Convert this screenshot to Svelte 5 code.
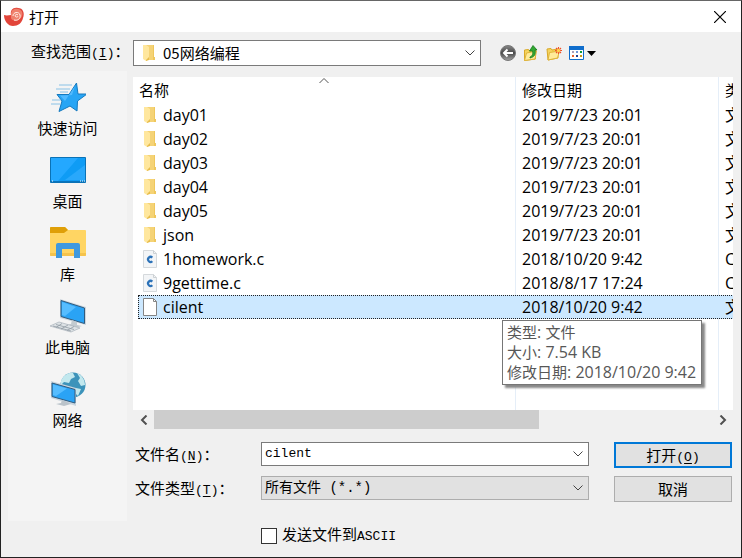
<script>
  const files = [
    { name: 'day01', date: '2019/7/23 20:01', type: '文件夹', kind: 'folder' },
    { name: 'day02', date: '2019/7/23 20:01', type: '文件夹', kind: 'folder' },
    { name: 'day03', date: '2019/7/23 20:01', type: '文件夹', kind: 'folder' },
    { name: 'day04', date: '2019/7/23 20:01', type: '文件夹', kind: 'folder' },
    { name: 'day05', date: '2019/7/23 20:01', type: '文件夹', kind: 'folder' },
    { name: 'json', date: '2019/7/23 20:01', type: '文件夹', kind: 'folder' },
    { name: '1homework.c', date: '2018/10/20 9:42', type: 'C 文件', kind: 'c' },
    { name: '9gettime.c', date: '2018/8/17 17:24', type: 'C 文件', kind: 'c' },
    { name: 'cilent', date: '2018/10/20 9:42', type: '文件', kind: 'file' }
  ];
  const places = ['快速访问', '桌面', '库', '此电脑', '网络'];
  let selected = $state('cilent');
  let fileName = $state('cilent');

  function pick(name) {
    selected = name;
    fileName = name;
  }
</script>

{#snippet folder()}
  <svg class="icon" width="16" height="18" viewBox="0 0 16 18" aria-hidden="true">
    <path d="M5 1h8v12h1v3H5z" fill="#efc75c" />
    <path d="M5 1h7v15H5z" fill="#f5d376" />
    <path d="M2 1h3l3 2v12l-3 2-3-2z" fill="#ffe79e" />
    <path d="M5 16l3-3v3l-3 1z" fill="#e8bd4c" />
  </svg>
{/snippet}

{#snippet chevron()}
  <svg class="chev" width="10" height="6" viewBox="0 0 10 6" aria-hidden="true">
    <path d="M.5.5 5 5 9.500.5" fill="none" stroke="#444" stroke-width="1" />
  </svg>
{/snippet}

<div class="dialog" role="dialog" aria-label="打开">
  <header>
    <svg width="22" height="20" viewBox="0 0 22 20" aria-hidden="true">
      <path d="M1 8C4 9 6 8 8 8 7 3 10 0 15 1c5 0 7 5 5 10-1 5-5 8-10 8C5 19 1 14 1 8z" fill="#e2453a" />
      <path d="M8 8c0-5 3-7 7-6 5 1 6 6 2 10-3 3-8 2-9-1z" fill="#ef806c" />
      <path d="M10 9c0-4 6-5 7-1 1 4-3 6-6 5M15 8c-2-2-4 1-2 2 1 0 2 0 2-1" fill="none" stroke="#fff0e8" stroke-width="1" />
    </svg>
    <h1>打开</h1>
    <button class="close" aria-label="关闭">
      <svg width="12" height="12" viewBox="0 0 12 12"><path d="M0 0l12 12M12 0L0 12" stroke="#000" stroke-width="1.200" /></svg>
    </button>
  </header>

  <div class="toolbar">
    <label for="range">查找范围<span class="mono">(<u>I</u>)</span>：</label>
    <div class="combo look">
      {@render folder()}
      <select id="range"><option>05网络编程</option></select>
      {@render chevron()}
    </div>
    <div class="tools">
      <button aria-label="后退">
        <svg width="18" height="18" viewBox="0 0 18 18">
          <defs><linearGradient id="ball" x2="0" y2="1"><stop stop-color="#888" /><stop offset=".5" stop-color="#484848" /><stop offset="1" stop-color="#a4a4a4" /></linearGradient></defs>
          <circle cx="9" cy="9" r="7.500" fill="url(#ball)" stroke="#777" />
          <path d="M14 9H5M8.500 5.500 5 9l3.500 3.500" fill="none" stroke="#fff" stroke-width="2" />
        </svg>
      </button>
      <button aria-label="向上一级">
        <svg width="18" height="18" viewBox="0 0 18 18">
          <path d="M2.500 6l4-.5 1 1.500 6-1v9l-11 1.500z" fill="#f5d45e" stroke="#d9a928" />
          <path d="M4.500 9l10-2-1.500 8-10.500 1.500z" fill="#ffeb9a" stroke="#dfb43a" />
          <path d="M8 13c3-1 3-4 2.500-6H7.500L11 1.500 15 6h-2c1 5-1 7-5 8z" fill="#32a832" stroke="#177b1c" stroke-width=".8" />
        </svg>
      </button>
      <button aria-label="新建文件夹">
        <svg width="18" height="18" viewBox="0 0 18 18">
          <path d="M2 5l4-.5 1 1.500 6-1v9L3 16z" fill="#f5d45e" stroke="#d9a928" />
          <path d="M4.500 8.500l10-1.500-2 7L3 16z" fill="#ffeb9a" stroke="#dfb43a" />
          <path d="M13.500 3v7M10 6.500h7M11 4l5 5M16 4l-5 5" stroke="#ef5028" stroke-width="1.100" />
          <circle cx="13.500" cy="6.500" r="1.700" fill="#ffd24a" />
        </svg>
      </button>
      <button class="view" aria-label="查看菜单">
        <svg width="29" height="18" viewBox="0 0 29 18">
          <path d="M1.500 2.500h14v13h-14z" fill="#fff" stroke="#0f6dcc" />
          <path d="M1 2h15v4H1z" fill="#0f6dcc" />
          <path d="M4 7h2v2H4z" fill="#aaa0b8" /><path d="M8 7h2v2H8z" fill="#6d94d8" /><path d="M12 7h2v2h-2z" fill="#0c9a38" />
          <path d="M4 11h2v2H4z" fill="#e8622c" /><path d="M8 11h2v2H8z" fill="#24408e" /><path d="M12 11h2v2h-2z" fill="#c89a10" />
          <path d="M19 7h9l-4.500 5z" fill="#000" />
        </svg>
      </button>
    </div>
  </div>

  <div class="body">
    <nav>
      {#each places as place, i}
        <button class="place">
          <svg width="36" height="36" viewBox="0 0 36 36" aria-hidden="true">
            {#if i === 0}
              <path d="M26.500 4l1.500 11h9l-9.500 7L27 32l-7-5L9 32.500l3-10.500L7 15.500h12z" fill="#27a5f5" stroke="#1679be" />
              <path d="M25 7l-3 9-12 .5 5 5.500z" fill="#51baff" />
              <path d="M9 6h13M6 10h14M10 13h8M2 21h9M1 25h9" stroke="#70b6e3" stroke-width=".8" />
            {:else if i === 1}
              <path d="M.5 5.500h35v25H.5z" fill="#0f9cf5" stroke="#0a72b6" />
              <path d="M1 6h27L8 29H1z" fill="#24a8ff" />
              <path d="M35 13v15H15z" fill="#3bb0ff" opacity=".6" />
              <path d="M1 29h34v1H1z" fill="#0874bd" />
              <path d="M2 29h1M30 29h1M32 29h1M34 29h1" stroke="#fff" />
            {:else if i === 2}
              <path d="M0 3q0-1 1-1h14l3 3h17q1 0 1 1v24q0 1-1 1H1q-1 0-1-1z" fill="#ffd563" />
              <path d="M0 3q0-1 1-1h14l3 3-4 3H0z" fill="#df9f08" />
              <path d="M0 28h36v2q0 1-1 1H1q-1 0-1-1z" fill="#f5c34c" />
              <path d="M6 33V20q0-2 2-2h20q2 0 2 2v13h-6v-9H12v9z" fill="#3f99df" />
            {:else if i === 3}
              <path d="M10 1l26 8v18l-26-7z" fill="#cbd5dd" />
              <path d="M11 2.500L34.500 10v15.500L11 18.500z" fill="#2aa3f5" stroke="#315b7d" />
              <path d="M12 4l14 5-11 9-3-1z" fill="#56bdff" />
              <path d="M22 22l5 2v3l5 1-7 2-8-3 4-1z" fill="#c3cbd0" />
              <path d="M0 28l9-4 21 6-9 4z" fill="#dee3e6" stroke="#a9b2ba" stroke-width=".7" />
              <path d="M3 28l18 5M6 26.500l18 5M6 29.500l6-4M11 31l7-4M17 32.500l7-4" stroke="#929ca5" stroke-width=".8" />
            {:else}
              <circle cx="23" cy="14" r="12.500" fill="#3c93ba" />
              <path d="M11 10c2-5 7-9 12-8l2 4-4 2-2 4-5-1-3 3zM27 2c5 2 8 7 8 12l-4 1-3-5 2-3zM26 17l5 1-3 7-4-4z" fill="#c2e8ee" />
              <path d="M1 10l25 7v18L1 27z" fill="#c9d5de" />
              <path d="M2 12l23 6.500V32L2 25.500z" fill="#2aa3f5" stroke="#315b7d" />
              <path d="M3 13.500l14 4L6 25l-3-1z" fill="#56bdff" />
              <path d="M12 29l5 2 4 2-7 2-8-2 5-1z" fill="#bac3ca" />
            {/if}
          </svg>
          <span>{place}</span>
        </button>
      {/each}
    </nav>

    <main>
      <div class="list">
        <svg class="sort" width="10" height="6" viewBox="0 0 10 6" aria-hidden="true"><path d="M.5 5 5 .5 9.500 5" fill="none" stroke="#555" /></svg>
        <table>
          <colgroup><col class="c-name" /><col class="c-date" /><col class="c-type" /></colgroup>
          <thead><tr><th>名称</th><th>修改日期</th><th>类型</th></tr></thead>
          <tbody>
            {#each files as f}
              <tr class:selected={f.name === selected} onclick={() => pick(f.name)}>
                <td>
                  <div class="name">
                    {#if f.kind === 'folder'}
                      {@render folder()}
                    {:else}
                      <svg class="icon" width="16" height="20" viewBox="0 0 16 20" aria-hidden="true">
                        <path d="M1.500 1.500h10l3 3v14h-13z" fill={f.kind === 'c' ? '#f3f5f7' : '#fff'} stroke={f.kind === 'c' ? '#d5d9dc' : '#858585'} />
                        <path d="M11.500 1.500v3h3" fill="none" stroke={f.kind === 'c' ? '#cdd1d4' : '#858585'} />
                        {#if f.kind === 'c'}
                          <path d="M10.300 8.600a2.500 2.500 0 1 0 0 3.600" fill="none" stroke="#2c72b8" stroke-width="2.200" />
                        {/if}
                      </svg>
                    {/if}
                    <span>{f.name}</span>
                  </div>
                </td>
                <td>{f.date}</td>
                <td>{f.type}</td>
              </tr>
            {/each}
          </tbody>
        </table>
        <div class="tip" role="tooltip">
          <p>类型<b>{': '}</b>文件</p>
          <p>大小<b>: 7.54 KB</b></p>
          <p>修改日期<b>: 2018/10/20 9:42</b></p>
        </div>
      </div>

      <div class="scroll">
        <button aria-label="向左滚动"><svg width="8" height="10" viewBox="0 0 8 10"><path d="M6.500.5 2 5l4.500 4.500" fill="none" stroke="#505050" stroke-width="2" /></svg></button>
        <div class="track"><div class="thumb"></div></div>
        <button aria-label="向右滚动"><svg width="8" height="10" viewBox="0 0 8 10"><path d="M1.500.5 6 5 1.500 9.500" fill="none" stroke="#505050" stroke-width="2" /></svg></button>
      </div>

      <form onsubmit={(e) => e.preventDefault()}>
        <label for="fname">文件名<span class="mono">(<u>N</u>)</span>：</label>
        <div class="combo">
          <input id="fname" type="text" bind:value={fileName} />
          {@render chevron()}
        </div>
        <button class="push primary" type="submit">打开<span class="mono">(<u>O</u>)</span></button>

        <label for="ftype">文件类型<span class="mono">(<u>T</u>)</span>：</label>
        <div class="combo gray">
          <select id="ftype"><option>所有文件 (*.*)</option></select>
          {@render chevron()}
        </div>
        <button class="push" type="button">取消</button>

        <label class="check"><input type="checkbox" /><span>发送文件到<span class="mono">ASCII</span></span></label>
      </form>
    </main>
  </div>
</div>

<style>
  :global(body) { margin: 0; }
  .dialog, .dialog * { box-sizing: border-box; }
  .dialog {
    min-height: 100vh;
    display: flex;
    flex-direction: column;
    background: #f0f0f0;
    border: 1px solid #222;
    border-top-color: #666;
    color: #000;
    font: 15px/22px 'Noto Sans CJK SC', sans-serif;
  }
  button, input, select { font: inherit; color: inherit; }
  button { background: none; border: 0; padding: 0; }
  svg { display: block; flex: none; }
  .mono { font-family: 'Liberation Mono', monospace; font-size: 13px; }
  u { text-underline-offset: 2px; }

  header {
    height: 31px;
    display: flex;
    align-items: center;
    background: #fff;
    padding-left: 2px;
  }
  h1 { flex: 1; margin: 0 0 0 4px; font-size: 15px; font-weight: 400; }
  .close { width: 42px; height: 31px; display: grid; place-items: center; }

  .toolbar {
    display: flex;
    align-items: center;
    height: 39px;
    padding: 2px 0 0 30px;
  }
  .toolbar label { width: 102px; white-space: nowrap; }
  .combo {
    display: flex;
    align-items: center;
    min-width: 0;
    height: 24px;
    padding: 0 5px 0 3px;
    background: #fff;
    border: 1px solid #7a7a7a;
  }
  .combo select, .combo input {
    flex: 1;
    min-width: 0;
    height: 22px;
    margin: 0;
    padding: 0;
    border: 0;
    outline: 0;
    background: none;
    appearance: none;
  }
  .combo input { font-family: 'Liberation Mono', monospace; font-size: 13px; }
  .combo.gray { background: #e1e1e1; border-color: #adadad; }
  .combo.gray select { font-family: 'Liberation Mono', 'Noto Sans CJK SC', monospace; font-size: 14px; }
  .look { flex: 1; height: 26px; padding-left: 7px; }
  .look select { margin-left: 6px; }
  .tools { display: flex; gap: 5px; width: 260px; padding-left: 18px; }

  .body { flex: 1; display: flex; gap: 6px; padding: 0 8px 0 7px; }
  nav {
    width: 119px;
    flex: none;
    margin-bottom: 36px;
    padding-top: 8px;
    background: #f4f4f4;
  }
  .place {
    width: 100%;
    height: 73px;
    display: flex;
    flex-direction: column;
    align-items: center;
    gap: 2px;
  }

  main { flex: 1; min-width: 0; display: flex; flex-direction: column; padding-top: 6px; }
  .list {
    position: relative;
    flex: 1;
    min-height: 333px;
    overflow: hidden;
    padding-left: 5px;
    background:
      linear-gradient(#e5eef8, #e5eef8) 382px 0 / 1px 100% no-repeat,
      linear-gradient(#e5eef8, #e5eef8) 585px 0 / 1px 100% no-repeat,
      #fff;
  }
  .sort { position: absolute; left: 186px; top: 1px; }
  table { width: 720px; table-layout: fixed; border-collapse: collapse; }
  .c-name { width: 378px; }
  .c-date { width: 203px; }
  th, td { padding: 0 0 0 6px; text-align: left; font-weight: 400; white-space: nowrap; }
  th { height: 26px; }
  th:first-child { padding-left: 1px; }
  td { height: 24px; font: 16px/22px 'Open Sans', 'Noto Sans CJK SC', sans-serif; }
  td:first-child { padding-left: 4px; }
  .name { display: flex; align-items: center; gap: 5px; height: 22px; }
  .selected { background: #cce8ff; outline: 1px dotted #222; outline-offset: -1px; }
  .tip {
    position: absolute;
    left: 369px;
    top: 243px;
    padding: 1px 5px 2px 4px;
    background: #fff;
    border: 1px solid #767676;
    box-shadow: 3px 3px 2px #888;
    color: #575757;
    white-space: nowrap;
  }
  .tip p { margin: 0; line-height: 20px; }
  .tip b { font-family: 'Open Sans', sans-serif; font-size: 16px; font-weight: 400; white-space: pre; }

  .scroll { display: flex; height: 19px; }
  .scroll button { width: 21px; display: grid; place-items: center; }
  .track { flex: 1; }
  .thumb { width: 69%; height: 19px; background: #cdcdcd; }

  form {
    display: grid;
    grid-template-columns: 126px minmax(0, 1fr) 118px;
    grid-template-rows: 26px 26px 38px;
    row-gap: 8px;
    align-items: center;
    padding: 13px 1px 9px 2px;
  }
  form label { white-space: nowrap; }
  form .combo { align-self: start; margin-right: 25px; }
  .push {
    height: 26px;
    background: #e1e1e1;
    border: 1px solid #adadad;
  }
  .primary { border: 2px solid #0078d7; }
  .check {
    grid-column: 2 / 4;
    align-self: end;
    display: flex;
    align-items: center;
    gap: 5px;
  }
  .check input {
    appearance: none;
    width: 16px;
    height: 16px;
    margin: 0;
    background: #fff;
    border: 1px solid #333;
  }
  .check input:checked { background: #0078d7; }
</style>
